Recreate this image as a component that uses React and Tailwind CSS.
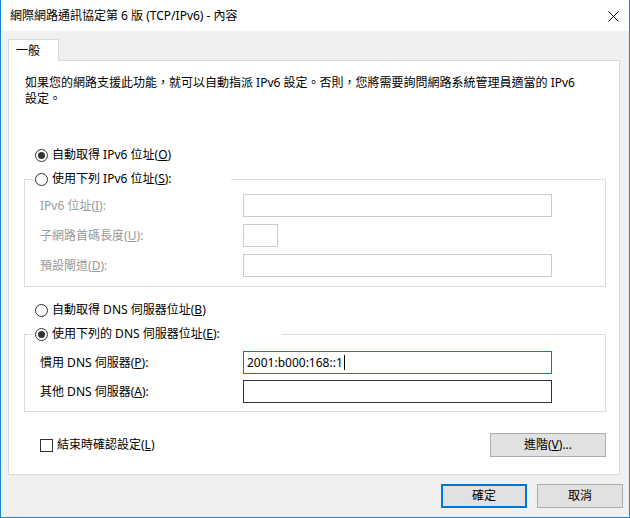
import React from "react";

const Radio = ({ checked }) => (
  <span className="w-[13px] h-[13px] rounded-full border border-[#333] bg-white flex items-center justify-center shrink-0">
    {checked && <span className="w-[7px] h-[7px] rounded-full bg-[#333]" />}
  </span>
);

const Field = ({ className = "" }) => (
  <div className={`h-[23px] border border-[#cccccc] bg-white ${className}`} />
);

const FieldRow = ({ label, k, after, children }) => (
  <div className="flex items-center h-[23px]">
    <span className="w-[203px] text-[#9a9a9a]">
      {label}(<u>{k}</u>){after}
    </span>
    {children}
  </div>
);

export default function App() {
  return (
    <div className="w-[630px] h-[518px] bg-[#f0f0f0] border-x border-b border-[#1883d7] flex flex-col text-[12px] text-black font-['Noto_Sans','Noto_Sans_CJK_TC',sans-serif] leading-[16px] overflow-hidden">
      {/* title bar */}
      <div className="h-[31px] bg-white flex items-center justify-between pl-[9px] pr-[10px] shrink-0">
        <span>網際網路通訊協定第 6 版 (TCP/IPv6) - 內容</span>
        <svg width="11" height="11" viewBox="0 0 11 11" className="mt-[1px]">
          <path d="M0.5 0.5 L10.5 10.5 M10.5 0.5 L0.5 10.5" stroke="#000" strokeWidth="1" />
        </svg>
      </div>

      {/* tab */}
      <div className="pt-[8px] pl-[7px] flex">
        <div className="relative z-10 -mb-px h-[22px] w-[51px] bg-white border-x border-t border-[#d9d9d9] pl-[7px] flex items-center">
          一般
        </div>
      </div>

      {/* panel */}
      <div className="ml-[7px] w-[612px] h-[415px] bg-white border border-[#d9d9d9] flex flex-col shrink-0">
        <p className="pl-[16px] pt-[14px]">
          如果您的網路支援此功能，就可以自動指派 IPv6 設定。否則，您將需要詢問網路系統管理員適當的 IPv6
          <br />
          設定。
        </p>

        <label className="mt-[38px] ml-[26px] h-[20px] flex items-center gap-[4px]">
          <Radio checked />
          <span>
            自動取得 IPv6 位址(<u>O</u>)
          </span>
        </label>

        <fieldset className="mt-[4px] ml-[15px] w-[582px] border border-[#dcdcdc] pl-[8px] pb-[9px]">
          <legend className="w-[198px] h-[20px] flex items-center gap-[4px] pl-[2px]">
            <Radio />
            <span>
              使用下列 IPv6 位址(<u>S</u>):
            </span>
          </legend>
          <div className="pl-[7px] pt-[5px] flex flex-col gap-[7px]">
            <FieldRow label="IPv6 位址" k="I" after=":">
              <Field className="w-[309px]" />
            </FieldRow>
            <FieldRow label="子網路首碼長度" k="U" after=":">
              <Field className="w-[35px]" />
            </FieldRow>
            <FieldRow label="預設閘道" k="D" after=":">
              <Field className="w-[309px]" />
            </FieldRow>
          </div>
        </fieldset>

        <label className="mt-[13px] ml-[26px] h-[20px] flex items-center gap-[4px]">
          <Radio />
          <span>
            自動取得 DNS 伺服器位址(<u>B</u>)
          </span>
        </label>

        <fieldset className="mt-[4px] ml-[15px] w-[582px] border border-[#dcdcdc] pl-[8px] pb-[8px]">
          <legend className="w-[249px] h-[20px] flex items-center gap-[4px] pl-[2px]">
            <Radio checked />
            <span>
              使用下列的 DNS 伺服器位址(<u>E</u>):
            </span>
          </legend>
          <div className="pl-[7px] pt-[7px] flex flex-col gap-[6px]">
            <div className="flex items-center h-[23px]">
              <span className="w-[203px]">
                慣用 DNS 伺服器(<u>P</u>):
              </span>
              <div className="w-[309px] h-[23px] border border-[#0078d7] bg-white flex items-center pl-[3px]">
                <span>2001:b000:168::1</span>
                <span className="w-px h-[15px] bg-black ml-px" />
              </div>
            </div>
            <div className="flex items-center h-[23px]">
              <span className="w-[203px]">
                其他 DNS 伺服器(<u>A</u>):
              </span>
              <div className="w-[309px] h-[23px] border border-[#333] bg-white" />
            </div>
          </div>
        </fieldset>

        <div className="mt-[21px] pl-[31px] pr-[13px] flex items-center justify-between h-[24px]">
          <label className="flex items-center gap-[4px]">
            <span className="w-[13px] h-[13px] border border-[#333] bg-white" />
            <span>
              結束時確認設定(<u>L</u>)
            </span>
          </label>
          <button className="w-[116px] h-[24px] bg-[#e1e1e1] border border-[#adadad]">
            進階(<u>V</u>)...
          </button>
        </div>
      </div>

      {/* dialog buttons */}
      <div className="mt-[9px] pr-[6px] flex justify-end gap-[10px]">
        <button className="w-[86px] h-[24px] bg-[#e1e1e1] border-2 border-[#0078d7]">確定</button>
        <button className="w-[86px] h-[24px] bg-[#e1e1e1] border border-[#adadad]">取消</button>
      </div>
    </div>
  );
}
